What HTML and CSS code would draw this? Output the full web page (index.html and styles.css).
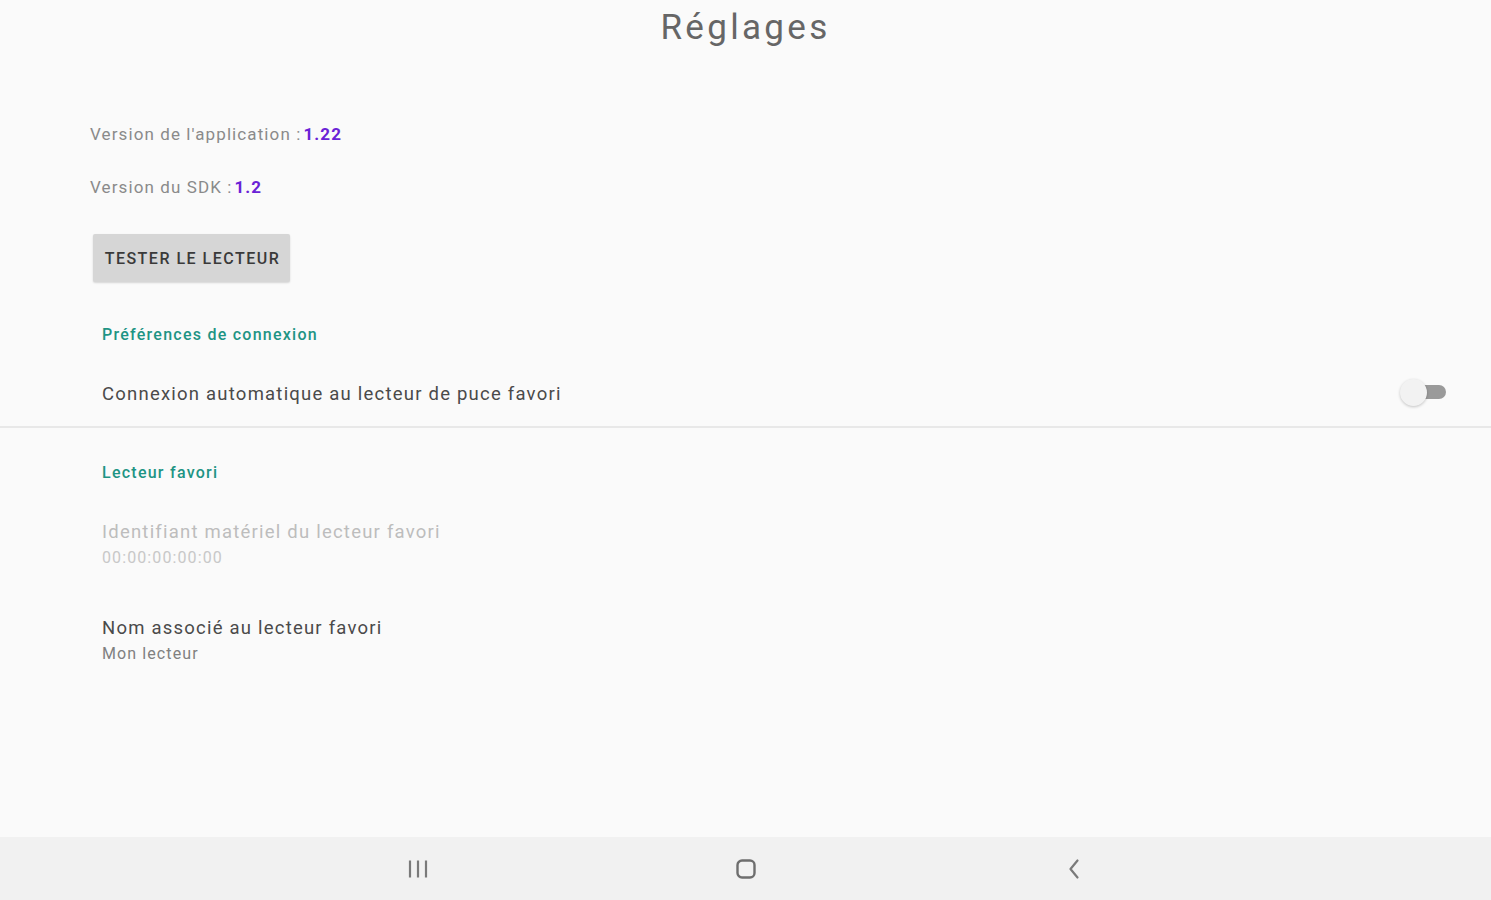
FILE: index.html
```html
<!DOCTYPE html>
<html lang="fr">
<head>
<meta charset="utf-8">
<title>Réglages</title>
<link rel="stylesheet" href="styles.css">
</head>
<body>
<div class="screen">
  <main class="content">
    <h1 class="title">Réglages</h1>
    <div class="info">
      <p class="version">Version de l'application :<b class="num">1.22</b></p>
      <p class="version">Version du SDK :<b class="num">1.2</b></p>
      <button class="btn">TESTER LE LECTEUR</button>
    </div>
    <section class="group">
      <h2 class="cat">Préférences de connexion</h2>
      <div class="pref pref-switch">
        <span class="pref-title">Connexion automatique au lecteur de puce favori</span>
        <span class="switch"><span class="track"></span><span class="thumb"></span></span>
      </div>
    </section>
    <div class="divider"></div>
    <section class="group">
      <h2 class="cat cat2">Lecteur favori</h2>
      <div class="pref disabled">
        <span class="pref-title">Identifiant matériel du lecteur favori</span>
        <span class="pref-sum">00:00:00:00:00</span>
      </div>
      <div class="pref">
        <span class="pref-title">Nom associé au lecteur favori</span>
        <span class="pref-sum">Mon lecteur</span>
      </div>
    </section>
  </main>
  <nav class="navbar">
    <span class="nav-btn">
      <svg width="22" height="22" viewBox="0 0 22 22"><g stroke="#7a7a7a" stroke-width="2.2" stroke-linecap="butt"><line x1="3" y1="2.5" x2="3" y2="19.5"/><line x1="11" y1="2.5" x2="11" y2="19.5"/><line x1="19" y1="2.5" x2="19" y2="19.5"/></g></svg>
    </span>
    <span class="nav-btn">
      <svg width="22" height="22" viewBox="0 0 22 22"><rect x="2.5" y="2.5" width="17" height="17" rx="4.5" fill="none" stroke="#6e6e6e" stroke-width="2.4"/></svg>
    </span>
    <span class="nav-btn">
      <svg width="22" height="22" viewBox="0 0 22 22"><polyline points="14.5,2.5 7.5,11 14.5,19.5" fill="none" stroke="#7a7a7a" stroke-width="2.2" stroke-linecap="round" stroke-linejoin="round"/></svg>
    </span>
  </nav>
</div>
</body>
</html>
```
FILE: styles.css
```css
* { box-sizing: border-box; }
html, body { margin: 0; padding: 0; }
body {
  background: #fafafa;
  font-family: Roboto, "Noto Sans", "Liberation Sans", sans-serif;
  width: 1491px;
  height: 900px;
  overflow: hidden;
}
.screen {
  display: flex;
  flex-direction: column;
  height: 900px;
}
.content {
  flex: 1;
}
.title {
  margin: 0;
  padding-top: 7px;
  text-align: center;
  font-weight: 400;
  font-size: 35px;
  line-height: 42px;
  letter-spacing: 3.3px;
  color: #666;
}
.info {
  padding: 75px 0 0 90px;
  display: flex;
  flex-direction: column;
  align-items: flex-start;
}
.version {
  margin: 0 0 33px 0;
  font-size: 17px;
  line-height: 20px;
  letter-spacing: 1.1px;
  color: #8a8a8a;
}
.version + .version { margin-bottom: 37px; }
.num {
  color: #6a22d6;
  font-weight: 700;
  margin-left: 2px;
}
.btn {
  margin-left: 3px;
  width: 197px;
  height: 48px;
  border: none;
  border-radius: 2px;
  background: #d6d6d6;
  box-shadow: 0 1px 2px rgba(0,0,0,0.15);
  font-family: inherit;
  font-size: 16px;
  font-weight: 500;
  color: #3a3a3a;
  letter-spacing: 1.5px;
  padding: 0 0 0 2px;
}
.group {
  padding-left: 102px;
}
.cat {
  margin: 0;
  padding-top: 43px;
  font-size: 16px;
  line-height: 20px;
  font-weight: 500;
  letter-spacing: 1.25px;
  color: #1e9484;
}
.cat2 { padding-top: 35px; }
.pref {
  display: flex;
  flex-direction: column;
  padding: 0;
}
.pref-switch {
  flex-direction: row;
  align-items: center;
  justify-content: space-between;
  padding-right: 45px;
  margin-top: 38px;
  height: 22px;
}
.pref-title {
  font-size: 18.5px;
  line-height: 22px;
  letter-spacing: 1.22px;
  color: #4a4a4a;
}
.pref-sum {
  font-size: 16px;
  line-height: 20px;
  letter-spacing: 1.1px;
  color: #808080;
  margin-top: 5px;
}
.disabled { margin-top: 38px; }
.disabled .pref-title { color: #bdbdbd; }
.disabled .pref-sum { color: #c8c8c8; }
.pref + .pref { margin-top: 49px; }
.switch {
  position: relative;
  width: 46px;
  height: 26px;
  margin-top: -4px;
  display: block;
}
.track {
  position: absolute;
  left: 12px;
  top: 6px;
  width: 34px;
  height: 14px;
  border-radius: 7px;
  background: #9a9a9a;
}
.thumb {
  position: absolute;
  left: 0;
  top: 0;
  width: 27px;
  height: 27px;
  border-radius: 50%;
  background: #f2f2f2;
  box-shadow: 0 1px 3px rgba(0,0,0,0.22);
}
.divider {
  margin-top: 21px;
  height: 2px;
  background: #e8e8e8;
}
.navbar {
  height: 63px;
  background: #f1f1f1;
  display: flex;
  align-items: center;
  justify-content: center;
  gap: 306px;
}
.nav-btn {
  width: 22px;
  height: 22px;
  display: flex;
}
```
